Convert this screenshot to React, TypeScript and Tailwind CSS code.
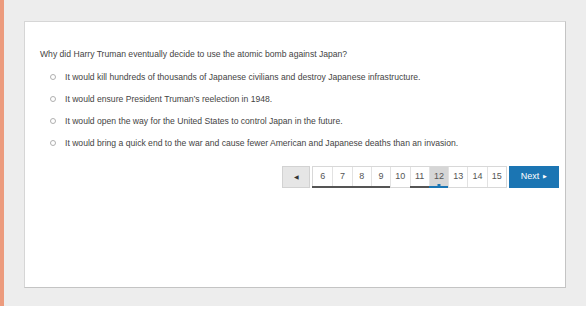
import React from "react";

const options = [
  "It would kill hundreds of thousands of Japanese civilians and destroy Japanese infrastructure.",
  "It would ensure President Truman\u2019s reelection in 1948.",
  "It would open the way for the United States to control Japan in the future.",
  "It would bring a quick end to the war and cause fewer American and Japanese deaths than an invasion.",
];

const pages = [
  { n: 6, u: "dark" },
  { n: 7, u: "dark" },
  { n: 8, u: "dark" },
  { n: 9, u: "dark" },
  { n: 10, u: "" },
  { n: 11, u: "dark" },
  { n: 12, u: "blue" },
  { n: 13, u: "" },
  { n: 14, u: "" },
  { n: 15, u: "" },
];

export default function App() {
  return (
    <div
      className="w-[587px] h-[310px] bg-white"
      style={{ fontFamily: '"Liberation Sans", Arial, sans-serif' }}
    >
      <div className="flex w-[586px] h-[306px] bg-[#ededed]">
        <div className="w-[4px] h-full bg-[#ec9b7d]" />
        <div className="pl-[20px] pt-[21px]">
          <div className="w-[542px] h-[267px] bg-white border border-[#d6d6d6] border-r-[#c4c4c4] border-b-[#c4c4c4] pt-[26px] pl-[15px] pr-[6px]">
            <div className="text-[8.6px] leading-[12px] text-[#444]">
              Why did Harry Truman eventually decide to use the atomic bomb against Japan?
            </div>
            <div className="flex flex-col gap-[10px] mt-[11px]">
              {options.map((o) => (
                <div key={o} className="flex items-center h-[12px]">
                  <div className="ml-[10px] w-[6px] h-[6px] rounded-full border border-[#b0b0b0] bg-white" />
                  <div className="ml-[9px] text-[8.6px] leading-[12px] text-[#444]">{o}</div>
                </div>
              ))}
            </div>
            <div className="flex justify-end mt-[17px]">
              <div className="flex h-[22px] items-stretch">
                <div className="w-[28px] bg-[#e6e6e6] border border-[#d2d2d2] flex items-center justify-center text-[#333] text-[6px]">
                  ◀
                </div>
                <div className="flex ml-[2px] border border-[#d8d8d8] bg-white">
                  {pages.map((p, i) => (
                    <div
                      key={p.n}
                      className={`relative w-[19.3px] flex items-center justify-center text-[9px] text-[#555] ${
                        i > 0 ? "border-l border-[#e2e2e2]" : ""
                      } ${p.n === 12 ? "bg-[#d6d6d6]" : ""}`}
                    >
                      {p.n}
                      {p.u === "dark" && (
                        <div className="absolute left-[-1px] right-0 bottom-[-1px] h-[2px] bg-[#555]" />
                      )}
                      {p.u === "blue" && (
                        <>
                          <div className="absolute left-[-1px] right-0 bottom-[-1px] h-[2px] bg-[#1b75b3]" />
                          <div className="absolute left-1/2 -translate-x-1/2 bottom-[1px] w-[3px] h-[2px] bg-[#1b75b3]" />
                        </>
                      )}
                    </div>
                  ))}
                </div>
                <div className="ml-[2px] w-[50px] bg-[#1b75b3] flex items-center justify-center gap-[4px] text-white text-[9px]">
                  <span>Next</span>
                  <span className="text-[5px]">▶</span>
                </div>
              </div>
            </div>
          </div>
        </div>
      </div>
    </div>
  );
}
